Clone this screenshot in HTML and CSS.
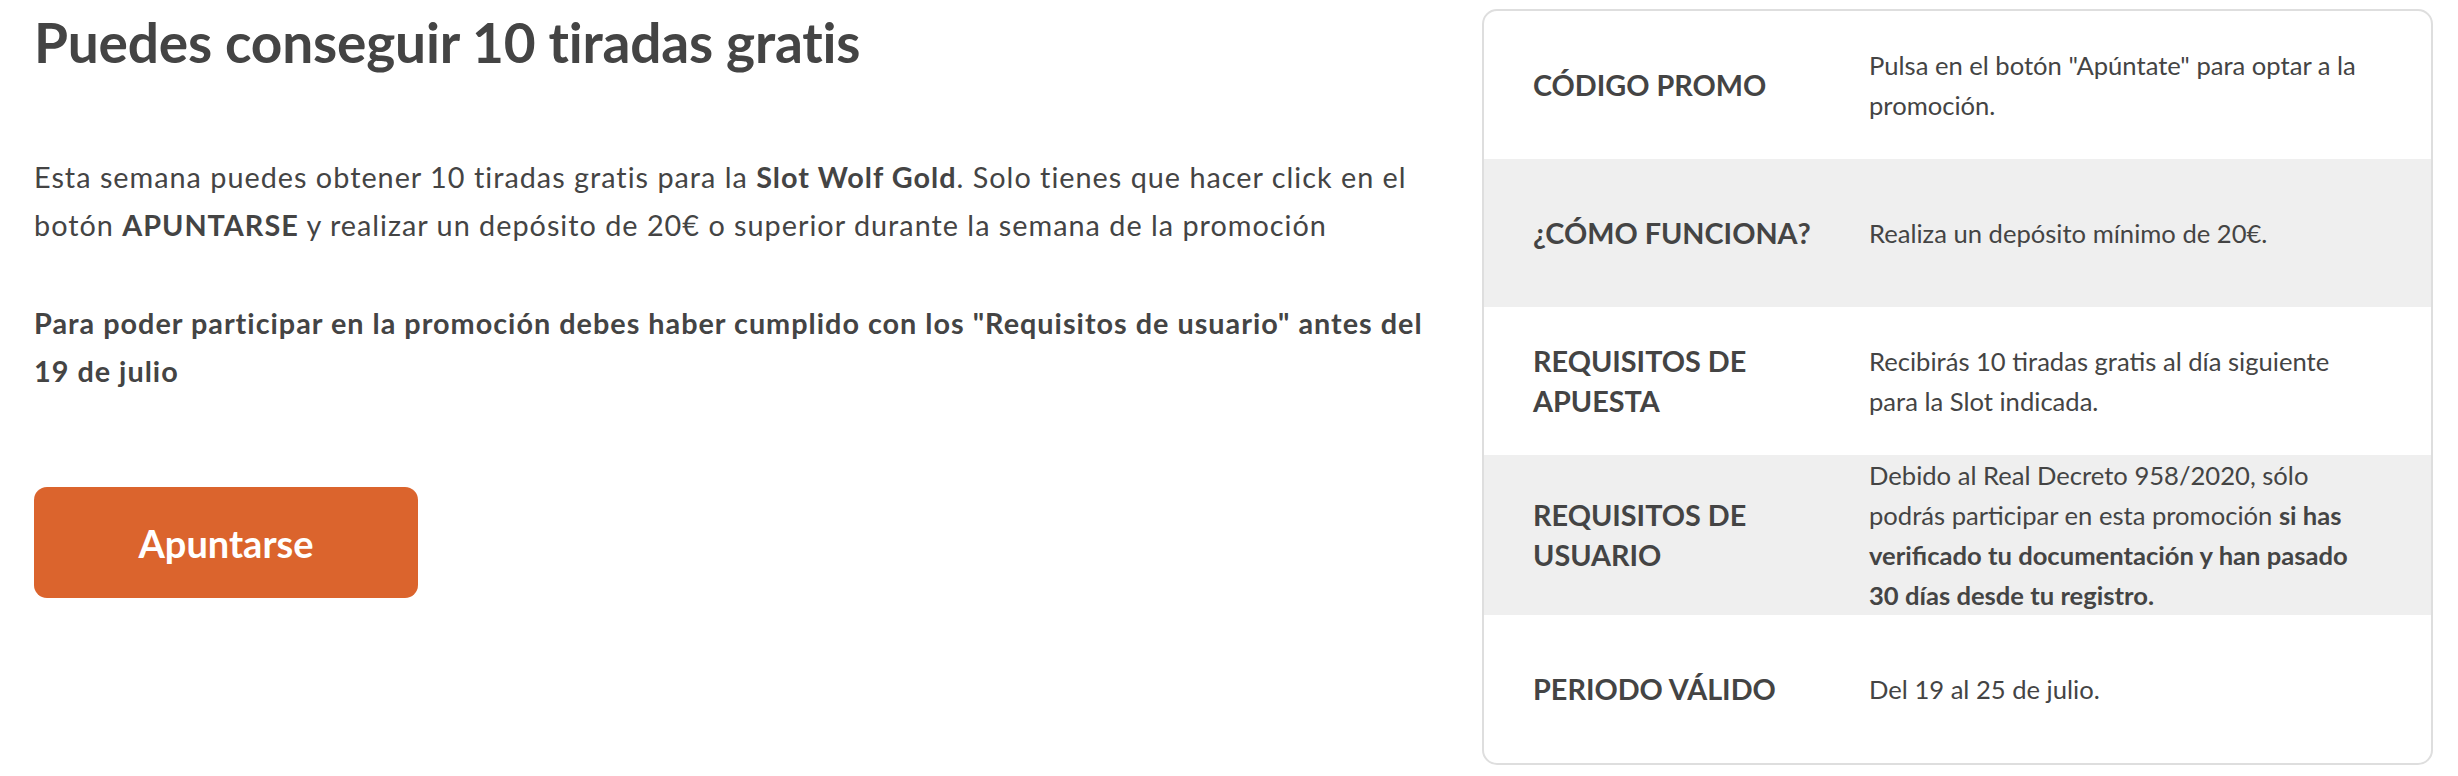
FILE: index.html
```html
<!DOCTYPE html>
<html lang="es">
<head>
    <meta charset="UTF-8">
    <meta name="viewport" content="width=device-width, initial-scale=1.0">
    <title>Tiradas gratis</title>
    <link rel="stylesheet" href="styles.css">
</head>
<body>
    <div class="promo">
        <div class="promo-info">
            <h1>Puedes conseguir 10 tiradas gratis</h1>
            <p>Esta semana puedes obtener 10 tiradas gratis para la <b>Slot Wolf Gold</b>. Solo tienes que hacer click en el botón <b>APUNTARSE</b> y realizar un depósito de 20€ o superior durante la semana de la promoción</p>
            <p class="promo-note">Para poder participar en la promoción debes haber cumplido con los "Requisitos de usuario" antes del 19 de julio</p>
            <a href="#" class="join-button">Apuntarse</a>
        </div>
        <div class="promo-card">
            <div class="card-row">
                <div class="row-label">CÓDIGO PROMO</div>
                <div class="row-value">Pulsa en el botón "Apúntate" para optar a la promoción.</div>
            </div>
            <div class="card-row grey">
                <div class="row-label">¿CÓMO FUNCIONA?</div>
                <div class="row-value">Realiza un depósito mínimo de 20€.</div>
            </div>
            <div class="card-row">
                <div class="row-label">REQUISITOS DE APUESTA</div>
                <div class="row-value">Recibirás 10 tiradas gratis al día siguiente<br>para la Slot indicada.</div>
            </div>
            <div class="card-row grey">
                <div class="row-label">REQUISITOS DE USUARIO</div>
                <div class="row-value">Debido al Real Decreto 958/2020, sólo podrás participar en esta promoción <b>si has verificado tu documentación y han pasado<br>30 días desde tu registro.</b></div>
            </div>
            <div class="card-row">
                <div class="row-label">PERIODO VÁLIDO</div>
                <div class="row-value">Del 19 al 25 de julio.</div>
            </div>
        </div>
    </div>
</body>
</html>
```

FILE: styles.css
```css
body {
    margin: 0;
    background-color: white;
    color: #444;
    font-family: Lato, "Open Sans", sans-serif;
}
.promo {
    display: flex;
    gap: 47px;
    padding: 7px 25px 0 34px;
}
.promo-info {
    flex: 1;
}
h1 {
    font-size: 55px;
    font-weight: 700;
    letter-spacing: -0.2px;
    line-height: 70px;
    margin: 0 0 76px;
}
.promo-info p {
    font-size: 28.8px;
    letter-spacing: 1px;
    line-height: 48px;
    margin: 0 0 50px;
}
.promo-info b, .promo-note {
    font-weight: 700;
}
.join-button {
    display: flex;
    align-items: center;
    justify-content: center;
    width: 384px;
    height: 111px;
    margin-top: 92px;
    background-color: #db642d;
    color: white;
    font-size: 38px;
    font-weight: 700;
    text-decoration: none;
    border-radius: 13px;
}
.promo-card {
    width: 947px;
    flex-shrink: 0;
    margin-top: 2px;
    border: 2px solid #dedede;
    border-radius: 15px;
    overflow: hidden;
}
.card-row {
    display: grid;
    grid-template-columns: 336px 1fr;
    align-items: center;
    min-height: 148px;
    padding: 0 42px 0 49px;
}
.card-row.grey {
    background-color: #efefef;
}
.row-label {
    font-size: 28.8px;
    font-weight: 700;
    line-height: 40px;
}
.row-value {
    font-size: 25.6px;
    line-height: 40px;
}
.row-value b {
    font-weight: 700;
}
```
